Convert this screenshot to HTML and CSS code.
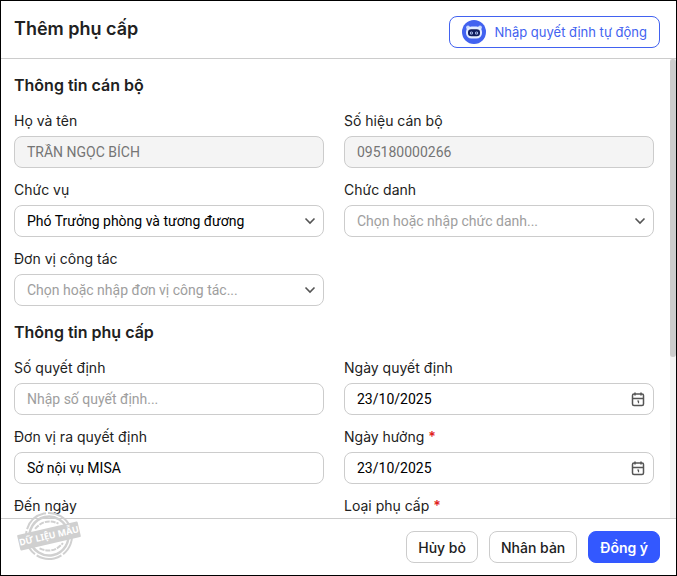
FILE: index.html
```html
<!DOCTYPE html>
<html lang="vi">
<head>
  <meta charset="UTF-8" />
  <meta name="viewport" content="width=device-width, initial-scale=1" />
  <title>Thêm phụ cấp</title>
  <link rel="stylesheet" href="styles.css">
</head>
<body>

<svg class="defs" aria-hidden="true">
  <symbol id="icon-down" viewBox="0 0 12 12">
    <path d="M1.500 3.500 6 8l4.500-4.500" fill="none" stroke="#555" stroke-width="1.600"/>
  </symbol>
  <symbol id="icon-calendar" viewBox="0 0 16 16">
    <rect x="2.500" y="3" width="11" height="11.500" rx="1.500" fill="none" stroke="#555" stroke-width="1.500"/>
    <path d="M2.500 7.500h11M5 1.500v3M11 1.500v3" fill="none" stroke="#555" stroke-width="1.500"/>
    <path d="M7.200 10h1.300v2.300" fill="none" stroke="#555" stroke-width="1.200"/>
  </symbol>
</svg>

<form class="dialog">
  <header class="dialog-header">
    <h1>Thêm phụ cấp</h1>
    <button type="button" class="btn btn-auto">
      <svg class="bot" viewBox="0 0 24 24" aria-hidden="true">
        <circle cx="12" cy="12" r="12" fill="#4262f0"/>
        <circle cx="6" cy="7.500" r="1.900" fill="#c9d9fd"/>
        <circle cx="18" cy="7.500" r="1.900" fill="#c9d9fd"/>
        <rect x="4" y="6.500" width="16" height="12" rx="5.500" fill="#e4edff"/>
        <rect x="6" y="9.300" width="12" height="7" rx="3.300" fill="#101c5c"/>
        <circle cx="9.400" cy="13" r="1.600" fill="#b9cdfb"/>
        <circle cx="14.600" cy="13" r="1.600" fill="#b9cdfb"/>
        <circle cx="9.400" cy="13" r=".7" fill="#101c5c"/>
        <circle cx="14.600" cy="13" r=".7" fill="#101c5c"/>
      </svg>
      Nhập quyết định tự động
    </button>
  </header>

  <div class="dialog-main">
    <div class="dialog-body">
      <h2>Thông tin cán bộ</h2>
      <div class="form-grid">
        <div class="field">
          <label for="hoTen">Họ và tên</label>
          <input id="hoTen" class="control" type="text" value="TRẦN NGỌC BÍCH" disabled>
        </div>
        <div class="field">
          <label for="soHieu">Số hiệu cán bộ</label>
          <input id="soHieu" class="control" type="text" value="095180000266" disabled>
        </div>
        <div class="field">
          <label for="chucVu">Chức vụ</label>
          <div class="control-wrap">
            <select id="chucVu" class="control"><option>Phó Trưởng phòng và tương đương</option></select>
            <svg class="icon-down"><use href="#icon-down"/></svg>
          </div>
        </div>
        <div class="field">
          <label for="chucDanh">Chức danh</label>
          <div class="control-wrap">
            <select id="chucDanh" class="control empty"><option value="">Chọn hoặc nhập chức danh...</option></select>
            <svg class="icon-down"><use href="#icon-down"/></svg>
          </div>
        </div>
        <div class="field">
          <label for="donVi">Đơn vị công tác</label>
          <div class="control-wrap">
            <select id="donVi" class="control empty"><option value="">Chọn hoặc nhập đơn vị công tác...</option></select>
            <svg class="icon-down"><use href="#icon-down"/></svg>
          </div>
        </div>
      </div>

      <h2>Thông tin phụ cấp</h2>
      <div class="form-grid">
        <div class="field">
          <label for="soQd">Số quyết định</label>
          <input id="soQd" class="control" type="text" placeholder="Nhập số quyết định...">
        </div>
        <div class="field">
          <label for="ngayQd">Ngày quyết định</label>
          <div class="control-wrap">
            <input id="ngayQd" class="control" type="text" value="23/10/2025">
            <svg class="icon-calendar"><use href="#icon-calendar"/></svg>
          </div>
        </div>
        <div class="field">
          <label for="donViQd">Đơn vị ra quyết định</label>
          <input id="donViQd" class="control" type="text" value="Sở nội vụ MISA">
        </div>
        <div class="field">
          <label for="ngayHuong">Ngày hưởng <span class="required">*</span></label>
          <div class="control-wrap">
            <input id="ngayHuong" class="control" type="text" value="23/10/2025">
            <svg class="icon-calendar"><use href="#icon-calendar"/></svg>
          </div>
        </div>
        <div class="field">
          <label for="denNgay">Đến ngày</label>
          <div class="control-wrap">
            <input id="denNgay" class="control" type="text">
            <svg class="icon-calendar"><use href="#icon-calendar"/></svg>
          </div>
        </div>
        <div class="field">
          <label for="loaiPc">Loại phụ cấp <span class="required">*</span></label>
          <div class="control-wrap">
            <select id="loaiPc" class="control"></select>
            <svg class="icon-down"><use href="#icon-down"/></svg>
          </div>
        </div>
      </div>
    </div>
    <div class="scroll-track"><div class="scroll-thumb"></div></div>
  </div>

  <footer class="dialog-footer">
    <button type="button" class="btn">Hủy bỏ</button>
    <button type="button" class="btn">Nhân bản</button>
    <button type="submit" class="btn btn-primary">Đồng ý</button>
  </footer>

  <svg class="stamp" viewBox="0 0 64 50" aria-hidden="true">
    <g transform="rotate(-13 32 25)">
      <circle cx="32" cy="25" r="23" fill="none" stroke="#d0d0d0" stroke-width="2" stroke-dasharray="26 2"/>
      <circle cx="32" cy="25" r="19.500" fill="none" stroke="#d0d0d0" stroke-width="2.500"/>
      <path d="M20 15q12-9 24 0M20 35q12 9 24 0" fill="none" stroke="#d0d0d0" stroke-width="2" stroke-dasharray="5 1"/>
      <rect x="1" y="17" width="62" height="16" rx="1" fill="#d0d0d0"/>
      <text x="32" y="28" text-anchor="middle">DỮ LIỆU MẪU</text>
    </g>
  </svg>
</form>

</body>
</html>
```

FILE: styles.css
```css
* { box-sizing: border-box; }
body { margin: 0; font-family: Inter, Roboto, sans-serif; font-size: 14px; color: #212121; }
h1, h2 { margin: 0; font-weight: 600; }
h1 { font-size: 18px; line-height: 26px; }
h2 { font-size: 16px; line-height: 20px; margin-bottom: 16px; }
.defs { display: none; }
.dialog {
  position: relative;
  display: flex; flex-direction: column;
  height: 100vh;
  border: 1px solid #000;
  background: #fff;
}
.dialog-header {
  display: flex; justify-content: space-between; align-items: flex-start;
  padding: 15px 16px 10px 13px;
  border-bottom: 1px solid #ccc;
}
.dialog-main { flex: 1; min-height: 0; display: flex; }
.dialog-body { flex: 1; overflow-y: auto; scrollbar-width: none; padding: 16px 16px 16px 13px; }
.scroll-track { width: 6px; background: #f4f4f4; }
.scroll-thumb { height: 65%; background: #ccc; border-radius: 4px; }
.form-grid {
  display: grid; grid-template-columns: 1fr 1fr;
  gap: 12px 20px;
  margin-bottom: 16px;
}
.field { display: flex; flex-direction: column; gap: 5px; min-width: 0; }
.field label { line-height: 20px; }
.required { color: #e02020; font-weight: 600; }
.control-wrap { position: relative; }
.control {
  display: block;
  width: 100%; height: 32px;
  padding: 0 12px;
  border: 1px solid #ccc;
  border-radius: 8px;
  background: #fff;
  color: #000;
  font-family: Roboto, sans-serif;
  font-size: 14px;
  appearance: none;
}
.control:disabled { background: #f4f4f4; color: #757575; }
.control::placeholder { color: #9e9e9e; }
.control.empty { color: #9e9e9e; }
.icon-down { position: absolute; right: 8px; top: 10px; width: 12px; height: 12px; pointer-events: none; }
.icon-calendar { position: absolute; right: 8px; top: 8px; width: 16px; height: 16px; pointer-events: none; }
.btn {
  height: 32px;
  padding: 0 11px;
  border: 1px solid #ccc;
  border-radius: 8px;
  background: #fff;
  color: #212121;
  font-family: Inter, sans-serif;
  font-size: 14px;
  font-weight: 500;
  cursor: pointer;
}
.btn-primary { background: #3358ff; border-color: #3358ff; color: #fff; font-weight: 600; }
.btn-auto {
  display: flex; align-items: center; gap: 8px;
  padding: 0 12px;
  border-color: #4262f0;
  color: #4262f0;
  font-size: 13px;
  font-weight: 400;
}
.bot { width: 24px; height: 24px; }
.dialog-footer {
  display: flex; justify-content: flex-end; gap: 11px;
  padding: 12px 16px;
  border-top: 1px solid #ccc;
}
.stamp { position: absolute; left: 16px; bottom: 14px; width: 64px; height: 50px; }
.stamp text { fill: #fff; font-family: "Noto Sans", sans-serif; font-size: 9px; font-weight: 700; }
```
